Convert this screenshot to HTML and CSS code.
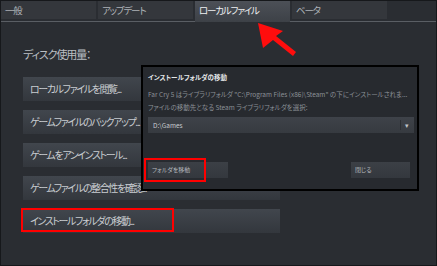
FILE: index.html
```html
<!DOCTYPE html>
<html>
<head>
<meta charset="utf-8">
<link rel="stylesheet" href="styles.css">
</head>
<body>
<div class="frame">
    <div class="tabbar">
        <div class="tab">一般</div>
        <div class="tab">アップデート</div>
        <div class="tab active">ローカルファイル</div>
        <div class="tab">ベータ</div>
    </div>

    <div class="content">
        <div class="heading">ディスク使用量：</div>
        <div class="btnlist">
            <div class="btn">ローカルファイルを閲覧...</div>
            <div class="btn">ゲームファイルのバックアップ...</div>
            <div class="btn">ゲームをアンインストール...</div>
            <div class="btn">ゲームファイルの整合性を確認...</div>
            <div class="btn">インストールフォルダの移動...</div>
        </div>
    </div>

    <!-- highlight on the main button -->
    <div class="mark mark-main"></div>

    <!-- the move folder dialog -->
    <div class="dialog">
        <div class="dlg-title">インストールフォルダの移動</div>
        <div class="dlg-text">Far Cry 5 はライブラリフォルダ "C:\Program Files (x86)\Steam" の下にインストールされま...</div>
        <div class="dlg-text">ファイルの移動先となる Steam ライブラリフォルダを選択:</div>
        <div class="select">
            <span class="select-val">D:\Games</span>
            <span class="select-arrow">&#9662;</span>
        </div>
        <div class="dlg-buttons">
            <div class="dbtn move">フォルダを移動</div>
            <div class="dbtn close">閉じる</div>
        </div>
        <div class="mark mark-dlg"></div>
    </div>

    <svg class="arrow" width="60" height="40" viewBox="0 0 60 40">
        <polygon points="2,2 27,10 20,15 40,31 37,35 17,19 7,27" fill="#ff0d0d"/>
    </svg>
</div>
</body>
</html>
```

FILE: styles.css
```css
*{ padding: 0; margin: 0; box-sizing: border-box; }

html, body
{
    width: 100%;
    height: 100%;
    background: #2a2d32;
    overflow: hidden;
}

body
{
    font-family: "Noto Sans CJK JP", "Liberation Sans", sans-serif;
    font-feature-settings: "palt";
    color: #c3c7cc;
}

.frame
{
    position: relative;
    width: 437px;
    height: 266px;
    border: 1px solid #16181b;
    background: #2a2d32;
}

/* tabs */
.tabbar
{
    display: flex;
    align-items: flex-start;
    gap: 2px;
    height: 21px;
    border-bottom: 1px solid #5a5e64;
}

.tab
{
    width: 95px;
    height: 18px;
    padding-left: 4px;
    background: #34373c;
    color: #aeb2b7;
    font-size: 9.5px;
    letter-spacing: -1.2px;
    line-height: 18px;
}

.tab.active
{
    height: 21px;
    margin-bottom: -1px;
    background: linear-gradient(#4c5057, #3d4147);
    color: #eef0f2;
}

/* main */
.content
{
    padding: 24px 0 0 22px;
}

.heading
{
    font-size: 11px;
    letter-spacing: -1.1px;
    line-height: 16px;
    color: #b9bec3;
}

.btnlist
{
    display: flex;
    flex-direction: column;
    gap: 9px;
    margin-top: 15px;
    width: 257px;
}

.btn
{
    height: 24px;
    padding-left: 7px;
    background: linear-gradient(#41464d, #33373d);
    font-size: 10px;
    letter-spacing: -1.4px;
    line-height: 24px;
    color: #c9cdd1;
    white-space: nowrap;
}

.mark
{
    position: absolute;
    border: 2px solid #f00;
}

.mark-main
{
    left: 20px;
    top: 207px;
    width: 153px;
    height: 24px;
}

/* dialog */
.dialog
{
    position: absolute;
    left: 140px;
    top: 64px;
    width: 278px;
    height: 126px;
    border: 2px solid #000;
    background: #272a2f;
    padding: 5px 5px 0 5px;
}

.dlg-title
{
    font-size: 6.5px;
    font-weight: bold;
    color: #e4e6e8;
    line-height: 10px;
    margin-bottom: 6px;
}

.dlg-text
{
    font-size: 6.5px;
    line-height: 13px;
    color: #8c9197;
    white-space: nowrap;
    overflow: hidden;
}

.select
{
    display: flex;
    align-items: center;
    height: 16px;
    margin-top: 3px;
    width: 266px;
    background: linear-gradient(#3e4249, #363a40);
    font-size: 6.5px;
    color: #c7cbcf;
}

.select-val
{
    flex: 1;
    padding-left: 5px;
}

.select-arrow
{
    width: 12px;
    margin-right: 2px;
    border-left: 1px solid #2c2f34;
    text-align: center;
    font-size: 7px;
    color: #c0c4c8;
}

.dlg-buttons
{
    display: flex;
    justify-content: space-between;
    margin-top: 29px;
    width: 262px;
}

.dbtn
{
    height: 16px;
    padding-left: 4px;
    background: linear-gradient(#3c4046, #34383e);
    font-size: 6px;
    line-height: 16px;
    color: #b6babe;
}

.dbtn.move { width: 80px; }
.dbtn.close { width: 59px; }

.mark-dlg
{
    left: 1px;
    top: 91px;
    width: 62px;
    height: 24px;
}

.arrow
{
    position: absolute;
    left: 255px;
    top: 20px;
}
```
